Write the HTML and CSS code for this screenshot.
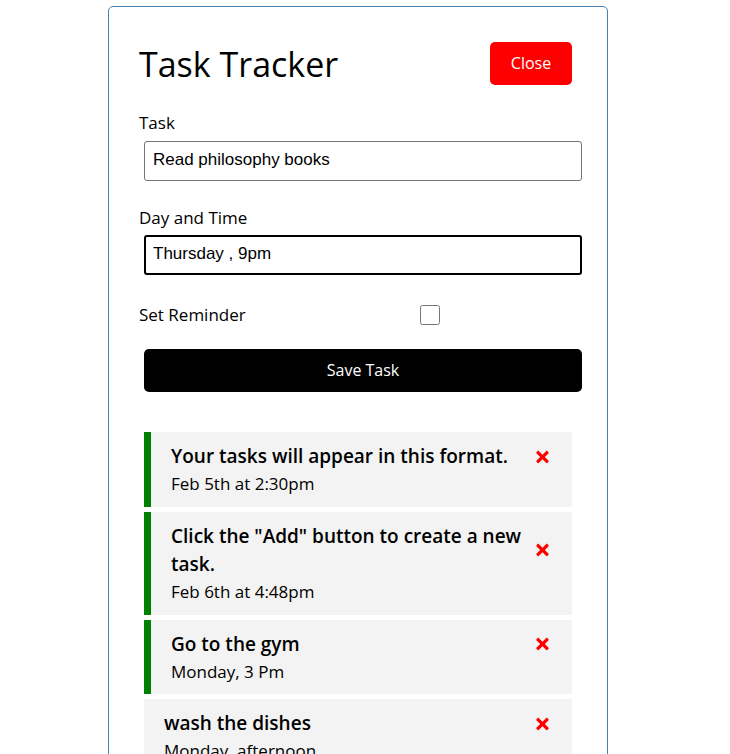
FILE: index.html
```html
<!DOCTYPE html>
<html lang="en">
<head>
<meta charset="utf-8">
<title>Task Tracker</title>
<link rel="stylesheet" href="styles.css">
</head>
<body>
<div class="container">
  <header class="header">
    <h1>Task Tracker</h1>
    <button class="btn btn-close" type="button">Close</button>
  </header>
  <form class="add-form">
    <div class="form-control">
      <label>Task</label>
      <input type="text" class="text-input" value="Read philosophy books">
    </div>
    <div class="form-control">
      <label>Day and Time</label>
      <input type="text" class="text-input focused" value="Thursday , 9pm">
    </div>
    <div class="form-control-check">
      <label>Set Reminder</label>
      <input type="checkbox" class="check">
    </div>
    <button type="button" class="btn btn-block">Save Task</button>
  </form>
  <div class="tasks">
    <div class="task reminder">
      <h3><span>Your tasks will appear in this format.</span>
        <svg class="del" viewBox="0 0 352 512"><path d="M242.72 256l100.07-100.07c12.28-12.28 12.28-32.19 0-44.48l-22.24-22.24c-12.28-12.28-32.19-12.28-44.48 0L176 189.28 75.93 89.21c-12.28-12.28-32.19-12.28-44.48 0L9.21 111.45c-12.28 12.28-12.28 32.19 0 44.48L109.28 256 9.21 356.07c-12.28 12.28-12.28 32.19 0 44.48l22.24 22.24c12.28 12.28 32.2 12.28 44.48 0L176 322.72l100.07 100.07c12.28 12.28 32.2 12.28 44.48 0l22.24-22.24c12.28-12.28 12.28-32.19 0-44.48L242.72 256z"/></svg>
      </h3>
      <p>Feb 5th at 2:30pm</p>
    </div>
    <div class="task reminder">
      <h3><span>Click the "Add" button to create a new task.</span>
        <svg class="del" viewBox="0 0 352 512"><path d="M242.72 256l100.07-100.07c12.28-12.28 12.28-32.19 0-44.48l-22.24-22.24c-12.28-12.28-32.19-12.28-44.48 0L176 189.28 75.93 89.21c-12.28-12.28-32.19-12.28-44.48 0L9.21 111.45c-12.28 12.28-12.28 32.19 0 44.48L109.28 256 9.21 356.07c-12.28 12.28-12.28 32.19 0 44.48l22.24 22.24c12.28 12.28 32.2 12.28 44.48 0L176 322.72l100.07 100.07c12.28 12.28 32.2 12.28 44.48 0l22.24-22.24c12.28-12.28 12.28-32.19 0-44.48L242.72 256z"/></svg>
      </h3>
      <p>Feb 6th at 4:48pm</p>
    </div>
    <div class="task reminder">
      <h3><span>Go to the gym</span>
        <svg class="del" viewBox="0 0 352 512"><path d="M242.72 256l100.07-100.07c12.28-12.28 12.28-32.19 0-44.48l-22.24-22.24c-12.28-12.28-32.19-12.28-44.48 0L176 189.28 75.93 89.21c-12.28-12.28-32.19-12.28-44.48 0L9.21 111.45c-12.28 12.28-12.28 32.19 0 44.48L109.28 256 9.21 356.07c-12.28 12.28-12.28 32.19 0 44.48l22.24 22.24c12.28 12.28 32.2 12.28 44.48 0L176 322.72l100.07 100.07c12.28 12.28 32.2 12.28 44.48 0l22.24-22.24c12.28-12.28 12.28-32.19 0-44.48L242.72 256z"/></svg>
      </h3>
      <p>Monday, 3 Pm</p>
    </div>
    <div class="task">
      <h3><span>wash the dishes</span>
        <svg class="del" viewBox="0 0 352 512"><path d="M242.72 256l100.07-100.07c12.28-12.28 12.28-32.19 0-44.48l-22.24-22.24c-12.28-12.28-32.19-12.28-44.48 0L176 189.28 75.93 89.21c-12.28-12.28-32.19-12.28-44.48 0L9.21 111.45c-12.28 12.28-12.28 32.19 0 44.48L109.28 256 9.21 356.07c-12.28 12.28-12.28 32.19 0 44.48l22.24 22.24c12.28 12.28 32.2 12.28 44.48 0L176 322.72l100.07 100.07c12.28 12.28 32.2 12.28 44.48 0l22.24-22.24c12.28-12.28 12.28-32.19 0-44.48L242.72 256z"/></svg>
      </h3>
      <p>Monday, afternoon</p>
    </div>
  </div>
</div>
</body>
</html>
```

FILE: styles.css
```css
* {
  box-sizing: border-box;
  margin: 0;
  padding: 0;
}

body {
  font-family: "Open Sans", "Noto Sans", sans-serif;
  font-size: 17px;
  line-height: 25.6px;
  color: #000;
  background: #fff;
  padding-right: 14px;
}

.container {
  max-width: 500px;
  margin: 6px auto 30px;
  border: 1px solid steelblue;
  border-radius: 5px;
  padding: 30px;
}

.header {
  display: flex;
  justify-content: space-between;
  align-items: center;
  margin-bottom: 20px;
}

.header h1 {
  font-size: 34px;
  font-weight: 500;
  line-height: 48px;
}

.btn {
  display: inline-block;
  background: #000;
  color: #fff;
  border: none;
  border-radius: 5px;
  padding: 10px 20px;
  margin: 5px;
  font-family: inherit;
  font-size: 16px;
  font-weight: 500;
  line-height: 23px;
  cursor: pointer;
}

.btn-close {
  background: #ff0000;
  width: 82px;
  padding: 10px 0;
}

.btn-block {
  display: block;
  width: 100%;
  margin: 0 0 0 5px;
}

.add-form {
  margin-bottom: 40px;
}

.form-control {
  margin-bottom: 24px;
}

.form-control label {
  display: block;
}

.text-input {
  display: block;
  width: 100%;
  height: 40px;
  margin: 5px 0 0 5px;
  padding: 2px 8px 4px;
  font-family: "Liberation Sans", Arial, sans-serif;
  font-size: 17px;
  color: #000;
  border: 1px solid #767676;
  border-radius: 3px;
  outline: none;
}

.text-input.focused {
  border: 2px solid #000;
  padding: 2px 7px 4px;
}

.form-control-check {
  display: flex;
  align-items: center;
  min-height: 31px;
  margin-bottom: 19px;
}

.form-control-check label {
  width: 281px;
}

.check {
  width: 20px;
  height: 20px;
  margin: 0;
}

.task {
  background: #f3f3f3;
  margin: 0 5px 5px;
  padding: 10px 20px;
  cursor: pointer;
}

.task.reminder {
  border-left: 7px solid green;
}

.task h3 {
  display: flex;
  align-items: center;
  justify-content: space-between;
  font-size: 19px;
  font-weight: 600;
  line-height: 28.8px;
}

.task p {
  font-size: 17px;
}

.del {
  flex: none;
  width: 13px;
  height: 18px;
  margin-left: 6px;
  margin-right: 3px;
  fill: #ff0000;
}
```
